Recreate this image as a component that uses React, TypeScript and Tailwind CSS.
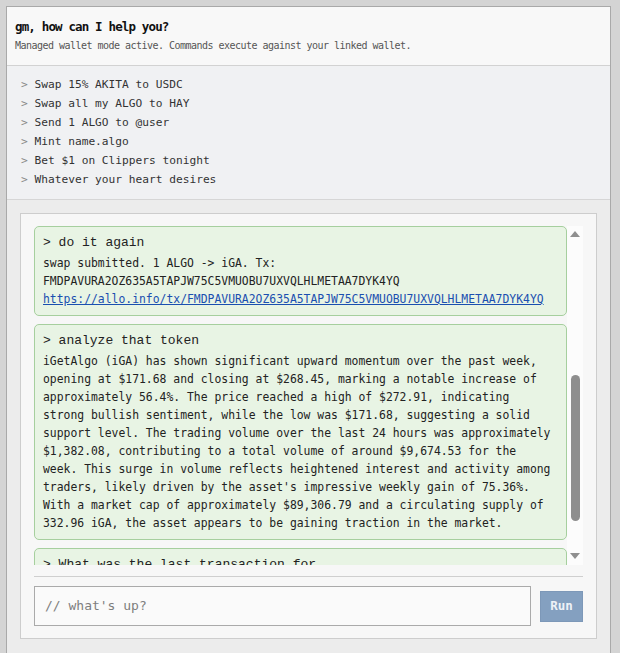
import React from "react";

const mono = { fontFamily: '"DejaVu Sans Mono", monospace' };

const suggestions = [
  "Swap 15% AKITA to USDC",
  "Swap all my ALGO to HAY",
  "Send 1 ALGO to @user",
  "Mint name.algo",
  "Bet $1 on Clippers tonight",
  "Whatever your heart desires",
];

const analysis = [
  "iGetAlgo (iGA) has shown significant upward momentum over the past week,",
  "opening at $171.68 and closing at $268.45, marking a notable increase of",
  "approximately 56.4%. The price reached a high of $272.91, indicating",
  "strong bullish sentiment, while the low was $171.68, suggesting a solid",
  "support level. The trading volume over the last 24 hours was approximately",
  "$1,382.08, contributing to a total volume of around $9,674.53 for the",
  "week. This surge in volume reflects heightened interest and activity among",
  "traders, likely driven by the asset's impressive weekly gain of 75.36%.",
  "With a market cap of approximately $89,306.79 and a circulating supply of",
  "332.96 iGA, the asset appears to be gaining traction in the market.",
];

function Card({ cmd, children }: { cmd: string; children?: React.ReactNode }) {
  return (
    <div className="shrink-0 rounded-[5px] border border-[#a6cf9e] bg-[#e8f4e4] px-[8px] pt-[7px] pb-[7px]">
      <div className="font-['Liberation_Mono',monospace] text-[13px] leading-[18px] text-[#222] mb-[2px] whitespace-nowrap">
        {cmd}
      </div>
      {children}
    </div>
  );
}

export default function App() {
  return (
    <div className="h-[653px] w-[620px] overflow-hidden bg-[#d4d4d4] pt-[6px] pl-[6px]">
      <div className="flex h-[700px] w-[605px] flex-col border border-[#a9a9a9] bg-[#ececec]">
        {/* header */}
        <div className="border-b border-[#d2d2d2] bg-[#f8f8f8] pl-[8px] pt-[11px] pb-[12px]" style={mono}>
          <div className="text-[12.5px] font-bold leading-[17px] tracking-[-0.85px] text-[#111]">
            gm, how can I help you?
          </div>
          <div className="mt-[4px] text-[10px] leading-[14px] tracking-[-0.52px] text-[#555]">
            Managed wallet mode active. Commands execute against your linked wallet.
          </div>
        </div>
        {/* suggestions */}
        <div className="border-b border-[#d6d6d6] bg-[#f0f1f3] pl-[14px] pt-[9px] pb-[10px]" style={mono}>
          {suggestions.map((s) => (
            <div key={s} className="text-[11.2px] leading-[19px] text-[#333] whitespace-nowrap">
              <span className="text-[#888]">&gt;</span> {s}
            </div>
          ))}
        </div>
        {/* chat panel */}
        <div className="px-[13px] pt-[13px]">
          <div className="flex w-[577px] flex-col border border-[#cdcdcd] bg-[#f7f7f7] px-[13px] pt-[12px] pb-[12px]">
            <div className="flex h-[339px]">
              <div className="flex w-[533px] flex-col gap-[8px] overflow-hidden" style={mono}>
                <Card cmd="> do it again">
                  <div className="text-[11.4px] leading-[18px] text-[#222] whitespace-nowrap">
                    <div>swap submitted. 1 ALGO -&gt; iGA. Tx:</div>
                    <div>FMDPAVURA2OZ635A5TAPJW75C5VMUOBU7UXVQLHLMETAA7DYK4YQ</div>
                    <a className="text-[#1a4fb0] underline" href="#">
                      https://allo.info/tx/FMDPAVURA2OZ635A5TAPJW75C5VMUOBU7UXVQLHLMETAA7DYK4YQ
                    </a>
                  </div>
                </Card>
                <Card cmd="> analyze that token">
                  <div className="text-[11.4px] leading-[18px] text-[#222] whitespace-nowrap">
                    {analysis.map((l) => (
                      <div key={l}>{l}</div>
                    ))}
                  </div>
                </Card>
                <Card cmd="> What was the last transaction for" />
              </div>
              {/* scrollbar */}
              <div className="relative w-[16px] shrink-0 bg-[#fcfcfc]">
                <svg className="absolute left-[3px] top-[5px]" width="10" height="6" viewBox="0 0 10 6">
                  <polygon points="5,0 10,6 0,6" fill="#8f8f8f" />
                </svg>
                <div className="absolute left-[4px] top-[149px] h-[146px] w-[9px] rounded-full bg-[#8e8e8e]" />
                <svg className="absolute left-[3px] bottom-[6px]" width="10" height="6" viewBox="0 0 10 6">
                  <polygon points="0,0 10,0 5,6" fill="#8f8f8f" />
                </svg>
              </div>
            </div>
            <div className="mt-[11px] border-t border-[#cfcfcf] pt-[9px] flex items-center gap-[9px]">
              <div
                className="flex h-[40px] w-[497px] items-center border border-[#aaaaaa] bg-[#fafafa] px-[10px] text-[13px] text-[#7e7e7e]"
                style={mono}
              >
                // what's up?
              </div>
              <button
                className="h-[31px] w-[43px] border border-[#7d98b8] bg-[#84a0c0] text-[12.5px] font-bold text-[#eef2f7]"
                style={mono}
              >
                Run
              </button>
            </div>
          </div>
        </div>
      </div>
    </div>
  );
}
